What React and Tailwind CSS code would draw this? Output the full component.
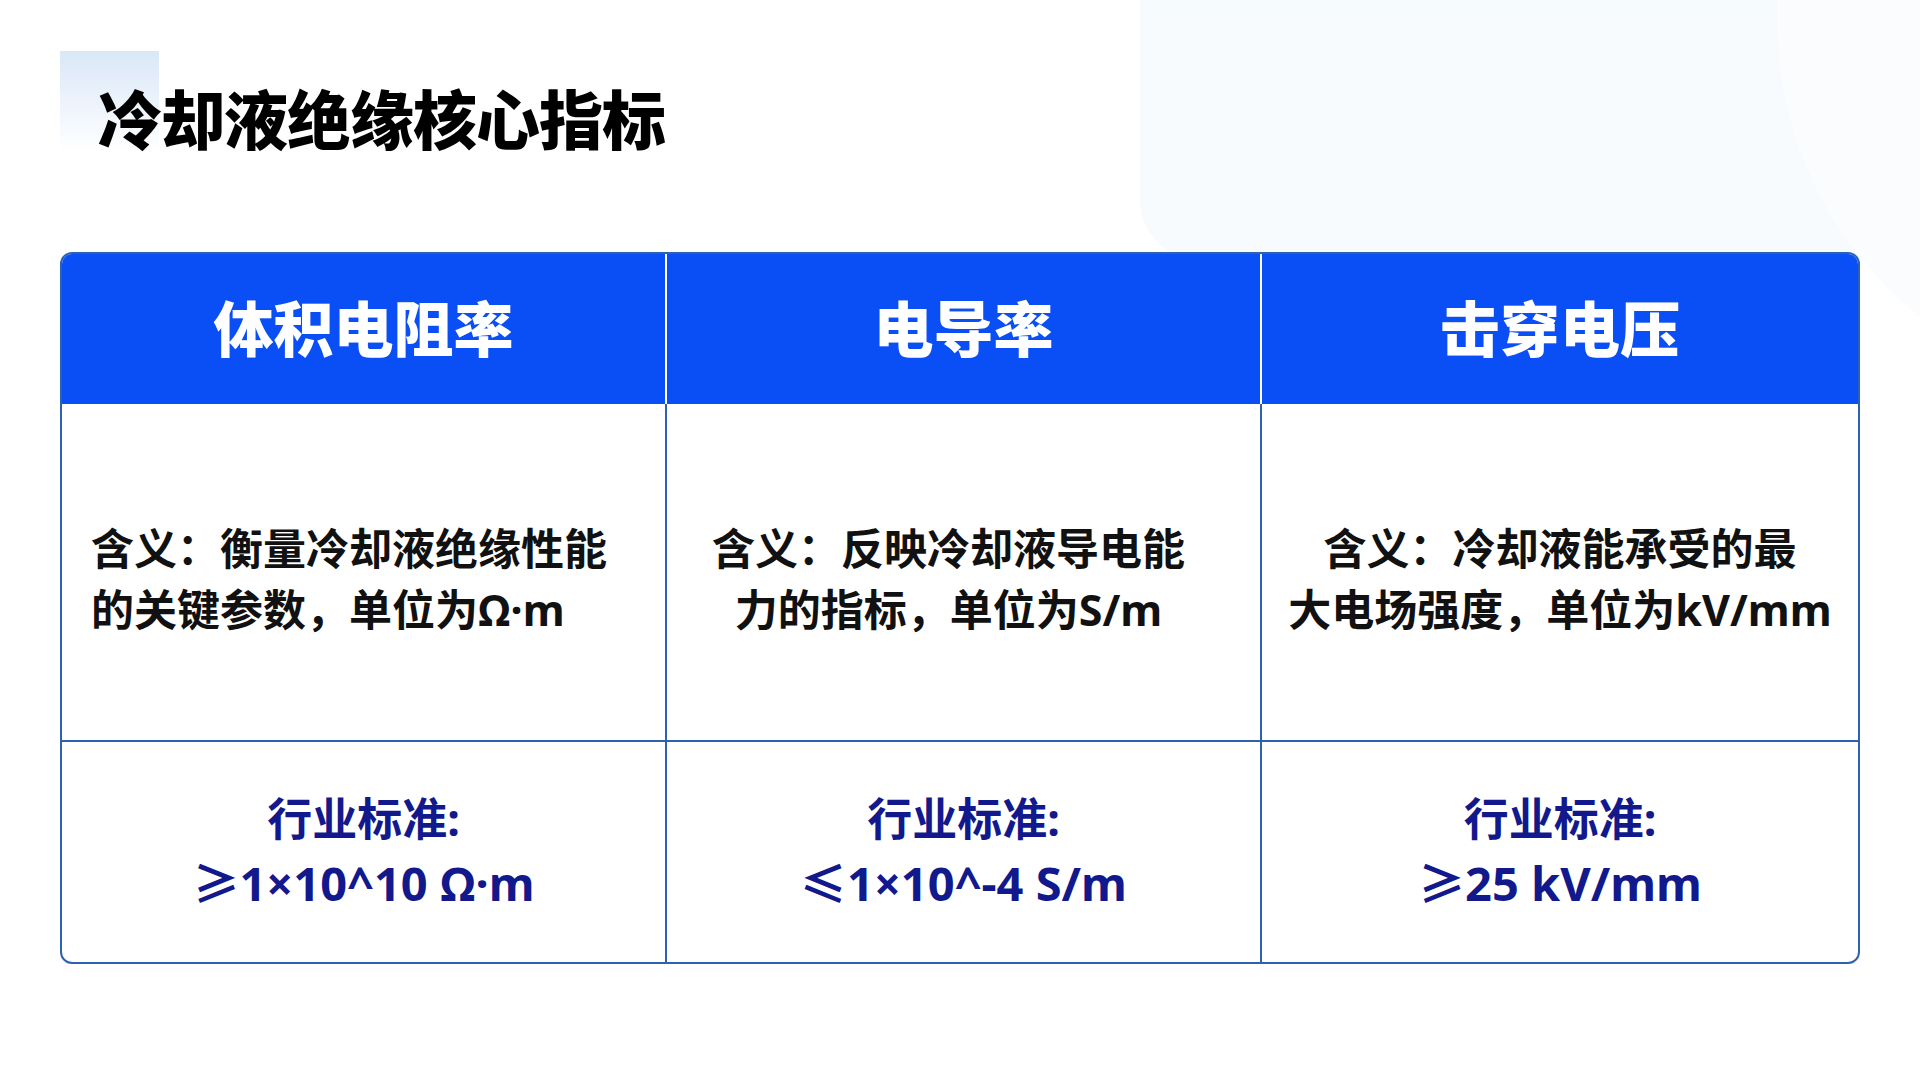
import React from "react"

const font = { fontFamily: '"Noto Sans", "Noto Sans CJK SC", sans-serif' }

const columns = [
  {
    title: "体积电阻率",
    desc: ["含义：衡量冷却液绝缘性能", "的关键参数，单位为Ω·m"],
    align: "text-left pl-[29px]",
    sign: "≥",
    value: "1×10^10 Ω·m",
  },
  {
    title: "电导率",
    desc: ["含义：反映冷却液导电能", "力的指标，单位为S/m"],
    align: "text-center pr-[30px]",
    sign: "≤",
    value: "1×10^-4 S/m",
  },
  {
    title: "击穿电压",
    desc: ["含义：冷却液能承受的最", "大电场强度，单位为kV/mm"],
    align: "text-center",
    sign: "≥",
    value: "25 kV/mm",
  },
]

const Cjk = ({ children }) => (
  <span style={{ fontFamily: '"Noto Sans CJK SC", sans-serif' }}>{children}</span>
)

const App = () => {
  return (
    <div className="relative w-[1920px] h-[1080px] overflow-hidden bg-white" style={font}>
      {/* faint background shapes */}
      <div className="absolute left-[1140px] -top-[100px] w-[900px] h-[360px] rounded-bl-[60px] bg-gradient-to-b from-[#f5fafd] to-[#f8fbfd]" />
      <div className="absolute left-[1777px] -top-[400px] w-[760px] h-[800px] rounded-full bg-[#fbfcfe]" />
      <div className="absolute left-[60px] top-[51px] w-[99px] h-[100px] bg-gradient-to-b from-[#d9e7f7] to-[#ffffff00]" />

      <div className="relative flex flex-col">
        <h1 className="ml-[98px] mt-[84px] text-[64px] leading-none font-black text-black tracking-[-1px]">
          <Cjk>冷却液绝缘核心指标</Cjk>
        </h1>

        <div className="ml-[60px] mt-[100px] w-[1800px] h-[712px] rounded-[12px] border-2 border-[#2d62b3] overflow-hidden grid grid-cols-[603px_595px_1fr] grid-rows-[150px_338px_1fr] bg-white">
          {columns.map((c, i) => (
            <div
              key={c.title}
              className={`flex items-center justify-center pb-[4px] bg-[#0a4ef5] ${i > 0 ? "border-l-2 border-white" : ""}`}
            >
              <span className="text-[60px] font-black text-white leading-none">
                <Cjk>{c.title}</Cjk>
              </span>
            </div>
          ))}
          {columns.map((c, i) => (
            <div
              key={c.title + "d"}
              className={`flex flex-col justify-center pt-[14px] border-b-2 border-[#2d62b3] ${c.align} ${i > 0 ? "border-l-2" : ""}`}
            >
              {c.desc.map((line) => (
                <p key={line} className="text-[43px] leading-[61px] font-bold text-[#111111]">
                  {line}
                </p>
              ))}
            </div>
          ))}
          {columns.map((c, i) => (
            <div
              key={c.title + "v"}
              className={`flex flex-col items-center justify-center pb-[4px] text-center text-[#12198c] border-[#2d62b3] ${i > 0 ? "border-l-2" : ""}`}
            >
              <p className="text-[45px] leading-[62px] font-bold">
                <Cjk>行业标准</Cjk>:
              </p>
              <p className="text-[47px] leading-[62px] font-bold">
                <Cjk>{c.sign}</Cjk>
                {c.value}
              </p>
            </div>
          ))}
        </div>
      </div>
    </div>
  )
}

export default App
